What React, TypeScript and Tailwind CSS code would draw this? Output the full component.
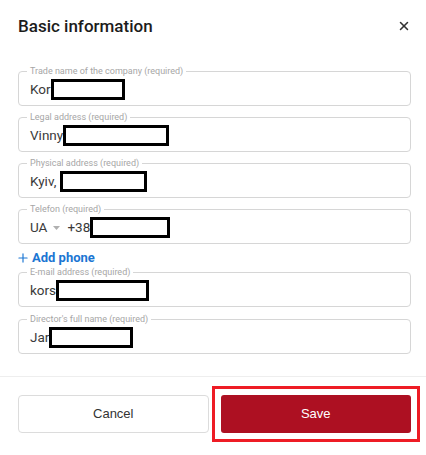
import { X, Plus } from 'lucide-react';

type Field = { label: string; prefix: string; redact: number; phone?: boolean };

const FIELDS: Field[] = [
  { label: 'Trade name of the company (required)', prefix: 'Kor', redact: 74 },
  { label: 'Legal address (required)', prefix: 'Vinny', redact: 106 },
  { label: 'Physical address (required)', prefix: 'Kyiv,\u00a0', redact: 87 },
  { label: 'Telefon (required)', prefix: '+38', redact: 80, phone: true },
];

const FIELDS_BOTTOM: Field[] = [
  { label: 'E-mail address (required)', prefix: 'kors', redact: 93 },
  { label: "Director's full name (required)", prefix: 'Jar', redact: 84 },
];

function Redacted({ width }: { width: number }) {
  return <span className="inline-block h-[21px] border-[3px] border-black bg-white" style={{ width }} />;
}

function OutlinedField({ field }: { field: Field }) {
  return (
    <div className="relative h-[35px] rounded-[4px] border border-[#d6d6d6] px-[11px] flex items-center">
      {/* notched label */}
      <span className="absolute -top-[7px] left-[8px] bg-white px-[3px] text-[9px] leading-[12px] text-[#a6a6a6]">
        {field.label}
      </span>
      <div className="flex items-center text-[13.5px] text-[#3a3a3a] mt-[2px]">
        {field.phone && (
          <>
            <span>UA</span>
            <svg width="7" height="4" viewBox="0 0 7 4" className="ml-[6px] mr-[7px]">
              <path d="M0 0h7L3.5 4z" fill="#b0b0b0" />
            </svg>
          </>
        )}
        <span>{field.prefix}</span>
        <Redacted width={field.redact} />
      </div>
    </div>
  );
}

export default function App() {
  return (
    <div className="w-[426px] h-[455px] bg-white" style={{ fontFamily: 'Roboto, "Noto Sans", sans-serif' }}>
      <div className="pl-[18px] pr-[15px] pt-[14px] flex items-center justify-between">
        <h2 className="text-[17px] font-medium leading-[24px] text-[#1c1c1c]">Basic information</h2>
        <X size={14} strokeWidth={2.6} className="text-[#333]" />
      </div>

      <div className="pl-[18px] pr-[15px] mt-[33px] flex flex-col gap-[11px]">
        {FIELDS.map((f) => (
          <OutlinedField key={f.label} field={f} />
        ))}
      </div>

      <div className="pl-[16px] mt-[6px] flex items-center gap-[2px] text-[#1b76d3]">
        <Plus size={14} strokeWidth={2} />
        <span className="text-[13px] font-bold leading-[16px]">Add phone</span>
      </div>

      <div className="pl-[18px] pr-[15px] mt-[6px] flex flex-col gap-[12px]">
        {FIELDS_BOTTOM.map((f) => (
          <OutlinedField key={f.label} field={f} />
        ))}
      </div>

      <div className="mt-[22px] border-t border-[#eeeeee]" />

      <div className="pl-[18px] pr-[15px] pt-[18px] grid grid-cols-2 gap-[12px]" style={{ fontFamily: '"Liberation Sans", Arial, sans-serif' }}>
        <button className="h-[38px] rounded-[4px] border border-[#dcdcdc] bg-white text-[13px] text-[#333]">Cancel</button>
        <div className="-m-[9px] border-[3px] border-[#ee1c25] p-[6px]">
          <button className="w-full h-[38px] rounded-[3px] bg-[#ad1022] text-[13px] text-white">Save</button>
        </div>
      </div>
    </div>
  );
}
